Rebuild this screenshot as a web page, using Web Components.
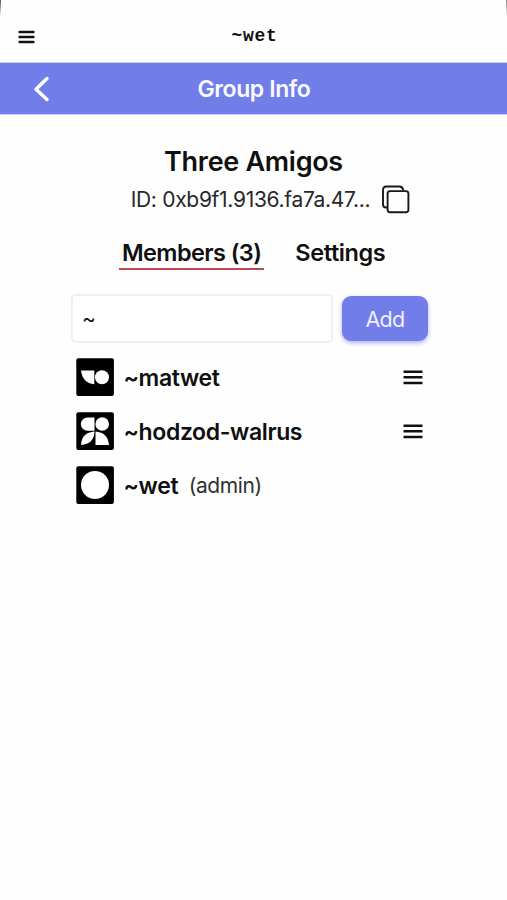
<!DOCTYPE html>
<html lang="en">
<head>
<meta charset="utf-8">
<meta name="viewport" content="width=device-width, initial-scale=1">
<title>Group Info</title>
<style>
  body {
    margin: 0;
    background: #fefefe;
    color: #101010;
    font-family: Inter, "Liberation Sans", sans-serif;
    --accent: #717de8;
    --underline: #bd4658;
  }
</style>
</head>
<body>
<group-page></group-page>

<script>
class MenuIcon extends HTMLElement {
  constructor() {
    super();
    this.attachShadow({ mode: 'open' });
  }

  connectedCallback() {
    const round = this.hasAttribute('round') ? 'round' : 'butt';
    const path = round === 'round' ? 'M2.6 2h13.8M2.6 7h13.8M2.6 12h13.8' : 'M.5 1.7h19M.5 7.3h19M.5 12.9h19';
    this.shadowRoot.innerHTML = `
      <style>
        :host { display: block; width: 20px; height: 15px; }
        svg { display: block; }
      </style>
      <svg width="20" height="15" viewBox="0 0 20 15" fill="none" stroke="#111" stroke-width="2.5" stroke-linecap="${round}">
        <path d="${path}"/>
      </svg>
    `;
  }
}

class AppHeader extends HTMLElement {
  constructor() {
    super();
    this.attachShadow({ mode: 'open' });
  }

  connectedCallback() {
    this.shadowRoot.innerHTML = `
      <style>
        :host {
          display: grid;
          grid-template-columns: 46px 1fr 46px;
          align-items: center;
          box-sizing: border-box;
          height: 62px;
          padding-top: 10px;
          background:
            linear-gradient(#555, #fefefe) left top / 1px 16px no-repeat,
            linear-gradient(#888, #fefefe) right top / 1px 16px no-repeat;
        }
        menu-icon { margin: 2px 0 0 17px; }
        span {
          text-align: center;
          font: bold 18px/20px "Liberation Mono", monospace;
          letter-spacing: .7px;
          margin: -1px 0 0 2px;
        }
      </style>
      <menu-icon round></menu-icon>
      <span><slot></slot></span>
    `;
  }
}

class TitleBar extends HTMLElement {
  constructor() {
    super();
    this.attachShadow({ mode: 'open' });
  }

  connectedCallback() {
    this.shadowRoot.innerHTML = `
      <style>
        :host {
          display: grid;
          grid-template-columns: 60px 1fr 59px;
          align-items: center;
          box-sizing: border-box;
          height: 53px;
          border: solid #c6caf5;
          border-width: 1px 0;
          background: var(--accent);
          color: #f8f9ff;
        }
        svg { margin-left: 32px; }
        span {
          text-align: center;
          font-size: 23px;
          font-weight: 600;
          letter-spacing: -.4px;
        }
      </style>
      <svg width="18" height="26" viewBox="0 0 18 26" fill="none" stroke="#fff" stroke-width="3.4" stroke-linecap="round" stroke-linejoin="round">
        <path d="M15 2.5 4 13.2 15 23.5"/>
      </svg>
      <span><slot></slot></span>
    `;
  }
}

class GroupHeading extends HTMLElement {
  constructor() {
    super();
    this.attachShadow({ mode: 'open' });
  }

  connectedCallback() {
    this.shadowRoot.innerHTML = `
      <style>
        :host {
          display: flex;
          flex-direction: column;
          align-items: center;
          padding-top: 32px;
        }
        h1 {
          margin: 0;
          font-size: 27px;
          line-height: 30px;
          font-weight: 600;
          letter-spacing: -.3px;
        }
        .id {
          display: flex;
          align-items: center;
          gap: 11px;
          height: 30px;
          margin: 7px 0 0 34px;
          font-size: 21px;
          letter-spacing: -.3px;
          color: #282828;
        }
      </style>
      <h1>${this.getAttribute('name')}</h1>
      <div class="id">
        <span>${this.getAttribute('group-id')}</span>
        <svg width="29" height="29" viewBox="0 0 29 29" fill="none" stroke="#181818" stroke-width="1.9" stroke-linejoin="round">
          <path d="M6.5 22.5H5Q2 22.5 2 19.5V5Q2 1.5 5.5 1.5H18.5Q21.5 1.5 22.3 5.2"/>
          <rect x="6.6" y="6.1" width="20.8" height="21.2" rx="2.5"/>
        </svg>
      </div>
    `;
  }
}

class TabItem extends HTMLElement {
  constructor() {
    super();
    this.attachShadow({ mode: 'open' });
  }

  connectedCallback() {
    this.shadowRoot.innerHTML = `
      <style>
        :host {
          display: block;
          padding: 0 3px;
          font-size: 23.5px;
          line-height: 30px;
          font-weight: 600;
          letter-spacing: -.6px;
          white-space: nowrap;
          border-bottom: 2px solid transparent;
        }
        :host([active]) { border-color: var(--underline); }
        :host(:not([active])) { letter-spacing: -.4px; }
      </style>
      <slot></slot>
    `;
  }
}

class AddMember extends HTMLElement {
  constructor() {
    super();
    this.attachShadow({ mode: 'open' });
  }

  connectedCallback() {
    this.shadowRoot.innerHTML = `
      <style>
        :host {
          display: flex;
          align-items: center;
          gap: 9px;
        }
        .field {
          box-sizing: border-box;
          width: 262px;
          height: 49px;
          padding: 0 9px;
          border: 2px solid #f0f0f0;
          border-radius: 5px;
          background: #fff;
          font-size: 21px;
          line-height: 45px;
        }
        button {
          width: 86px;
          height: 45px;
          padding: 0;
          border: 0;
          border-radius: 9px;
          background: var(--accent);
          box-shadow: 0 2px 4px #aab2f5;
          color: #eef0ff;
          font: 21.5px Inter, sans-serif;
          letter-spacing: -.7px;
        }
      </style>
      <div class="field">~</div>
      <button>Add</button>
    `;
  }
}

const SIGILS = {
  matwet: '<path d="M5 12.5H18.3V26.3Q6.5 25 5 12.5Z"/><circle cx="26" cy="19.3" r="7"/>',
  hodzod: '<path d="M18.5 5.5V18.8H11.5A6.65 6.65 0 0 1 11.5 5.5Z"/><circle cx="26.2" cy="12" r="6.8"/><path d="M5 33Q5.5 20.5 18.5 19.5Q18 32 5 33Z"/><path d="M19.5 19.5Q32 20.5 33 33H19.5Z"/>',
  wet: '<circle cx="19" cy="19" r="14"/>'
};

class SigilIcon extends HTMLElement {
  constructor() {
    super();
    this.attachShadow({ mode: 'open' });
  }

  connectedCallback() {
    this.shadowRoot.innerHTML = `
      <style>
        :host { display: block; width: 38px; height: 38px; }
        svg { display: block; }
      </style>
      <svg width="38" height="38" viewBox="0 0 38 38" fill="#fff">
        <rect x=".3" y=".3" width="37.6" height="37.6" rx="2" fill="#000"/>
        ${SIGILS[this.getAttribute('name')]}
      </svg>
    `;
  }
}

class MemberRow extends HTMLElement {
  constructor() {
    super();
    this.attachShadow({ mode: 'open' });
  }

  connectedCallback() {
    const admin = this.hasAttribute('admin');
    this.shadowRoot.innerHTML = `
      <style>
        :host {
          display: flex;
          align-items: center;
          height: 38px;
          padding: 0 5px;
        }
        .name {
          margin: 1px 0 0 9.5px;
          font-size: 23px;
          font-weight: 600;
          letter-spacing: -.38px;
        }
        .role {
          margin-left: 10.5px;
          font-size: 21px;
          letter-spacing: -.4px;
          color: #303030;
        }
        menu-icon { margin-left: auto; }
      </style>
      <sigil-icon name="${this.getAttribute('sigil')}"></sigil-icon>
      <span class="name"><slot></slot></span>
      ${admin ? '<span class="role">(admin)</span>' : '<menu-icon></menu-icon>'}
    `;
  }
}

class GroupPage extends HTMLElement {
  constructor() {
    super();
    this.attachShadow({ mode: 'open' });
  }

  connectedCallback() {
    this.shadowRoot.innerHTML = `
      <style>
        :host { display: block; min-height: 100vh; }
        nav {
          display: flex;
          gap: 28px;
          margin: 24px 0 0 119px;
        }
        main {
          width: 357px;
          margin: 24px 0 0 71px;
        }
        .members {
          display: flex;
          flex-direction: column;
          gap: 16px;
          margin-top: 15px;
        }
      </style>
      <app-header>~wet</app-header>
      <title-bar>Group Info</title-bar>
      <group-heading name="Three Amigos" group-id="ID: 0xb9f1.9136.fa7a.47..."></group-heading>
      <nav>
        <tab-item active>Members (3)</tab-item>
        <tab-item>Settings</tab-item>
      </nav>
      <main>
        <add-member></add-member>
        <div class="members">
          <member-row sigil="matwet">~matwet</member-row>
          <member-row sigil="hodzod">~hodzod-walrus</member-row>
          <member-row sigil="wet" admin>~wet</member-row>
        </div>
      </main>
    `;
  }
}

customElements.define('menu-icon', MenuIcon);
customElements.define('app-header', AppHeader);
customElements.define('title-bar', TitleBar);
customElements.define('group-heading', GroupHeading);
customElements.define('tab-item', TabItem);
customElements.define('add-member', AddMember);
customElements.define('sigil-icon', SigilIcon);
customElements.define('member-row', MemberRow);
customElements.define('group-page', GroupPage);
</script>
</body>
</html>
